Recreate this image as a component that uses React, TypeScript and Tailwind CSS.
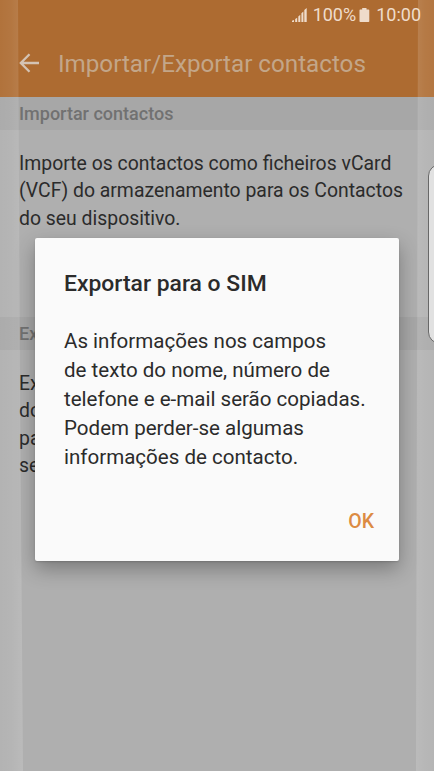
import type { ReactNode } from 'react'

interface SectionProps {
  children: ReactNode
  className?: string
  title: string
}

function StatusBar() {
  return (
    <div className="flex h-[30px] items-center justify-end pr-[13px] text-[18px] leading-[30px] text-[#efdccb]">
      <svg aria-hidden="true" className="mr-[6px] h-[15px] w-[15px]" fill="currentColor" viewBox="0 0 15 15">
        <path d="M0 12.800 2 12v2h-2zM3.200 11 5.200 9.800v4.200h-2zM6.300 8.500l2-1.800v7.300h-2zM9.400 5.300l2-1.800v10.500h-2zM12.300 2l2.400-2v14h-2.400z" />
      </svg>
      <span>100%</span>
      <svg aria-hidden="true" className="mr-[6px] ml-[3px] h-[15px] w-[11px]" fill="currentColor" viewBox="0 0 11 15">
        <path d="M3.200 0h4.300v1.500h2q.8 0 .8.800v11q0 .7-.8.700H1.300q-.8 0-.8-.7v-11q0-.8.800-.8h1.900z" />
      </svg>
      <span>10:00</span>
    </div>
  )
}

function AppHeader() {
  return (
    <header className="h-[97px] bg-[#ad6b31]">
      <StatusBar />
      <div className="flex h-[67px] items-center pl-[19px]">
        <button aria-label="Voltar" className="mt-[-2px] text-[#d4c3b4]" type="button">
          <svg className="h-[20px] w-[21px]" fill="none" stroke="currentColor" strokeWidth="2.300" viewBox="0 0 21 20">
            <path d="M20 10H2M10.500 1.200 1.800 10l8.700 8.800" />
          </svg>
        </button>
        <h1 className="ml-[18px] text-[24.200px] leading-8 whitespace-nowrap text-[#c3a689]">
          Importar/Exportar contactos
        </h1>
      </div>
    </header>
  )
}

function Section({ children, className = '', title }: SectionProps) {
  return (
    <section className={className}>
      <h2 className="h-[33px] bg-[#a7a7a7] pl-[19px] text-[18px] leading-[34px] font-medium text-[#717171]">
        {title}
      </h2>
      <p className="pt-[20px] pl-[19px] text-[19.400px] leading-[27.400px] whitespace-nowrap text-[#2b2b2b]">
        {children}
      </p>
    </section>
  )
}

function ExportDialog() {
  return (
    <div
      aria-labelledby="dialog-title"
      aria-modal="true"
      className="absolute top-[238px] left-[35px] flex h-[323px] w-[364px] flex-col rounded-[2px] bg-[#fafafa] px-[29px] text-[#2b2b2b] shadow-[0_8px_20px_rgba(0,0,0,0.3),0_1px_2px_rgba(0,0,0,0.15)]"
      role="dialog"
    >
      <h3 className="mt-[30px] text-[22.900px] leading-8 font-medium" id="dialog-title">
        Exportar para o SIM
      </h3>
      <p className="mt-[27px] text-[20.550px] leading-[29px] whitespace-nowrap">
        As informações nos campos
        <br />
        de texto do nome, número de
        <br />
        telefone e e-mail serão copiadas.
        <br />
        Podem perder-se algumas
        <br />
        informações de contacto.
      </p>
      <button className="mt-[36px] mr-[-4px] self-end text-[19.500px] leading-7 font-medium text-[#dc8b43]" type="button">
        OK
      </button>
    </div>
  )
}

// Curved glass on both sides of the screen, plus the edge panel handle.
function ScreenEdges() {
  return (
    <div aria-hidden="true" className="pointer-events-none absolute inset-0">
      <div className="absolute inset-y-0 left-0 w-[23px] bg-linear-to-r from-white/5 via-white/8 to-white/15 [clip-path:polygon(0_0,18px_0,20px_50%,23px_100%,0_100%)]" />
      <div className="absolute inset-y-0 right-0 w-[18px] bg-linear-to-r from-white/15 via-white/10 to-white/8 [clip-path:polygon(2px_0,100%_0,100%_100%,0_100%)]" />
      <div className="absolute top-[164px] right-[-18px] h-[180px] w-[24px] rounded-l-[12px] border-[1.500px] border-[#686868] bg-[#e1e1e1]" />
    </div>
  )
}

export default function App() {
  return (
    <main className="relative h-[771px] w-[434px] overflow-hidden bg-[#afafaf] font-[Roboto,sans-serif]">
      <AppHeader />
      <Section className="h-[220px]" title="Importar contactos">
        Importe os contactos como ficheiros vCard
        <br />
        (VCF) do armazenamento para os Contactos
        <br />
        do seu dispositivo.
      </Section>
      <Section title="Ex">
        Ex
        <br />
        do
        <br />
        pa
        <br />
        se
      </Section>
      <ExportDialog />
      <ScreenEdges />
    </main>
  )
}
